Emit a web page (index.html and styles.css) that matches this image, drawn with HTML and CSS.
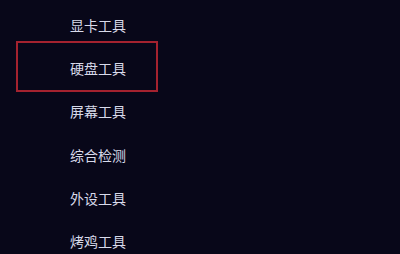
FILE: index.html
```html
<!DOCTYPE html>
<html lang="zh">
<head>
<meta charset="utf-8">
<link rel="stylesheet" href="styles.css">
</head>
<body>
<ul class="menu">
  <li class="item">显卡工具</li>
  <li class="item selected">硬盘工具</li>
  <li class="item">屏幕工具</li>
  <li class="item">综合检测</li>
  <li class="item">外设工具</li>
  <li class="item">烤鸡工具</li>
</ul>
</body>
</html>
```
FILE: styles.css
```css
html, body {
  margin: 0;
  padding: 0;
  width: 400px;
  height: 254px;
  overflow: hidden;
  background: #080719;
}
.menu {
  list-style: none;
  margin: 0;
  padding: 3px 0 0 16px;
  font-family: "Noto Sans CJK SC", "Noto Sans", sans-serif;
  font-size: 14px;
  color: #d8daea;
}
.item {
  position: relative;
  width: 142px;
  height: 43.3px;
  box-sizing: border-box;
  padding-left: 54px;
  display: flex;
  align-items: center;
}
.selected::after {
  content: "";
  position: absolute;
  left: 0;
  right: 0;
  top: -5px;
  bottom: -2px;
  border: 2px solid #a4222f;
}
```
